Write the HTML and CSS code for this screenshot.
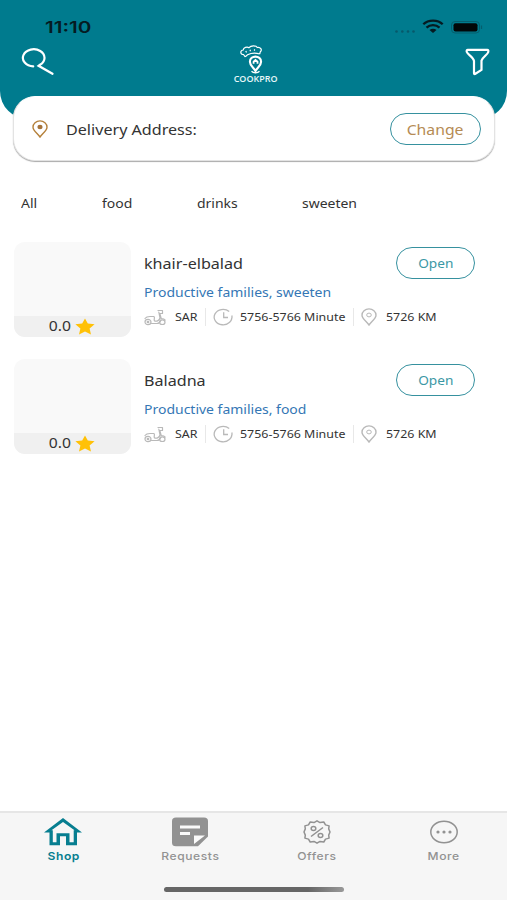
FILE: index.html
```html
<!DOCTYPE html>
<html lang="en">
<head>
<meta charset="utf-8">
<title>CookPro</title>
<link rel="stylesheet" href="styles.css">
</head>
<body>
<svg width="0" height="0" class="defs">
  <symbol id="pin" viewBox="0 0 16 18"><path d="M8 17C5.500 13.500 1 10.600 1 7.200a7 6.300 0 0 1 14 0C15 10.600 10.500 13.500 8 17Z" fill="none" stroke="currentColor" stroke-width="1.400"/></symbol>
  <symbol id="star" viewBox="0 0 20 17"><path d="M10 .4 12.800 5.600 19.600 6.300 14.600 10.400 16 16.600 10 13.500 4 16.600 5.400 10.400.4 6.300 7.200 5.600Z" fill="#ffc107"/></symbol>
  <symbol id="moto" viewBox="0 0 22 18"><g fill="none" stroke="#b9b9b9" stroke-width="1.200" stroke-linecap="round" stroke-linejoin="round"><ellipse cx="4" cy="14" rx="3" ry="2.600"/><ellipse cx="4" cy="14" rx=".8" ry=".6"/><ellipse cx="18.300" cy="14.200" rx="2.700" ry="2.300"/><path d="M1 10.500c1-1.500 3-2 5-2h4c1.200 1.500-.6 3.200.6 4.500 2.400.8 4.800-.8 5.400-3L14.800 4M14 2.500h4.500v3h-2.700l1.400 5c2 .2 3.300.6 4 1.500M7.500 15.500h5.500c2 0 3.200-1.500 3.900-3.500"/></g></symbol>
  <symbol id="clock" viewBox="0 0 20 18"><g fill="none" stroke="#b9b9b9" stroke-width="1.300"><path d="M18.800 7.500A8.900 7.700 0 1 1 16.200 3.500M18.900 9.500c-.2 2.500-1.200 4-2.500 5"/><path d="M10.700 4.200v5.300H15"/></g></symbol>
</svg>

<header class="header">
  <div class="status">
    <span class="time">11:10</span>
    <svg class="signal" width="90" height="18" viewBox="0 0 90 18">
      <g fill="#07596a"><circle cx="3.500" cy="13.500" r="1.300"/><circle cx="9.300" cy="13.500" r="1.300"/><circle cx="15" cy="13.500" r="1.300"/><circle cx="20.500" cy="13.500" r="1.300"/></g>
      <g transform="translate(-2 0)"><g fill="none" stroke="#051b22" stroke-width="2.300"><path d="M32.300 6.300c5-5 14.500-5 19.400 0"/><path d="M35.500 9.600c3.500-3.300 9.500-3.300 13 0"/></g>
      <path d="M38.500 12c2-1.700 5-1.700 7 0L42 15Z" fill="#051b22"/></g>
      <rect x="58.500" y="3.500" width="28" height="11.500" rx="3.500" fill="none" stroke="#055e6d"/>
      <rect x="60.500" y="5.200" width="24" height="8.300" rx="2" fill="#020708"/>
      <path d="M88.500 7.500v3.500" stroke="#055e6d" stroke-width="1.200"/>
    </svg>
  </div>
  <div class="bar">
    <svg width="34" height="28" viewBox="0 0 34 28" fill="none" stroke="#fff" stroke-width="2.200" stroke-linecap="round"><path d="M12.200 18.400A10.800 8.600 0 1 1 19 16.800L17.600 17.800 31.500 25.800"/></svg>
    <div class="logo">
      <svg width="32" height="30" viewBox="0 0 32 30" fill="none" stroke="#fff">
        <path d="M5.200 12.800 3.500 10.500C.2 10.500-.2 6.500 3.200 6 3.500 3.500 7 2.300 9 3.700 11 1.500 16 1.200 17.300 3.500c3.200-.6 5.200 2.300 3 4.300l-.6 2.200M5.200 12.800C7.500 9.700 13.500 8 19.700 10M6.500 8.500 5.800 7M10.500 7.300 10 5.800M14.500 6.800V5.200" stroke-width="1.200"/>
        <path d="M15.500 27c-1.500-3.200-5.600-5-5.600-9.300 0-6.800 11.200-6.800 11.200 0C21.100 22 17 23.800 15.500 27Z" stroke-width="2.100"/>
        <path d="M12.700 17.300 15.500 14.700l2.900 2.600v2.500h-1.800v-1.800h-2.100v1.800h-1.800Z" fill="#fff" stroke="none"/>
        <path d="M11.500 27.300c1.800 2 6.200 2 8 0" stroke-width="1.300"/>
      </svg>
      <span class="brand">COOKPRO</span>
    </div>
    <svg class="filter" width="25" height="28" viewBox="0 0 25 28" fill="none" stroke="#fff" stroke-width="2.200" stroke-linejoin="round"><path d="M2.800 1.800h19.400q1.600 0 1 2.300c-.5 2.500-5.500 5-6.700 8.500v9.300L10 26q-1 .3-1-1V13C8.500 9 2.500 6.500 1.700 3.800q-.3-2 1.100-2Z"/></svg>
  </div>
</header>

<section class="address">
  <svg class="address-pin" width="16" height="18"><use href="#pin"/><ellipse cx="8" cy="7" rx="2.600" ry="2.200" fill="#a5733a"/></svg>
  <span class="address-label wide">Delivery Address:</span>
  <button class="pill change"><span>Change</span></button>
</section>

<nav class="tabs"><span class="wide">All</span><span class="wide">food</span><span class="wide">drinks</span><span class="wide">sweeten</span></nav>

<main class="shops">
  <article class="shop">
    <div class="thumb"><div class="rating"><span>0.0</span><svg width="20" height="17"><use href="#star"/></svg></div></div>
    <div class="info">
      <div class="top"><h2 class="wide">khair-elbalad</h2><button class="pill open"><span>Open</span></button></div>
      <p class="kinds wide">Productive families, sweeten</p>
      <div class="meta">
        <svg width="22" height="18"><use href="#moto"/></svg><span class="sar">SAR</span>
        <svg class="ruled" width="20" height="18"><use href="#clock"/></svg><span class="minutes">5756-5766 Minute</span>
        <svg class="ruled grey" width="16" height="18"><use href="#pin"/><ellipse cx="8" cy="7" rx="2.300" ry="1.900" fill="none" stroke="#b9b9b9"/></svg><span class="km">5726 KM</span>
      </div>
    </div>
  </article>
  <article class="shop">
    <div class="thumb"><div class="rating"><span>0.0</span><svg width="20" height="17"><use href="#star"/></svg></div></div>
    <div class="info">
      <div class="top"><h2 class="wide">Baladna</h2><button class="pill open"><span>Open</span></button></div>
      <p class="kinds wide">Productive families, food</p>
      <div class="meta">
        <svg width="22" height="18"><use href="#moto"/></svg><span class="sar">SAR</span>
        <svg class="ruled" width="20" height="18"><use href="#clock"/></svg><span class="minutes">5756-5766 Minute</span>
        <svg class="ruled grey" width="16" height="18"><use href="#pin"/><ellipse cx="8" cy="7" rx="2.300" ry="1.900" fill="none" stroke="#b9b9b9"/></svg><span class="km">5726 KM</span>
      </div>
    </div>
  </article>
</main>

<footer class="footer">
  <div class="footer-tabs">
    <div class="item active">
      <svg width="38" height="30" viewBox="0 0 38 30"><path d="M0 15.500 19 1l19 14.500h-5V28.200h-11v-9h-6v9H5.500V15.500Z" fill="currentColor"/><path d="M7.500 13.300 19 5l11.500 8.300H29.700V25.200h-4.200v-9h-13v9H8.800V13.300Z" fill="#f6f6f6"/></svg>
      <span>Shop</span>
    </div>
    <div class="item">
      <svg width="38" height="30" viewBox="0 0 38 30"><path d="M5 .5h28q4 0 4 3.500V19.500L27 29.200H5q-4 0-4-3.500V4Q1 .5 5 .5Z" fill="#929292"/><path d="M9 8.500h20v3H9ZM9 15h10v3H9ZM23 18.500h11L23 27Z" fill="#fafafa"/></svg>
      <span>Requests</span>
    </div>
    <div class="item">
      <svg width="38" height="30" viewBox="0 0 38 30" fill="none" stroke="#929292" stroke-width="1.500"><path d="m19 3.800 3 1.800 3.800-.6 1.700 2.900 3.600 1-.4 3L32 15l-1.300 3.100.4 3-3.600 1-1.700 2.900-3.800-.6-3 1.800-3-1.800-3.800.6-1.700-2.900-3.600-1 .4-3L6 15l1.300-3.100-.4-3 3.600-1 1.700-2.900 3.800.6Z" stroke-linejoin="round"/><path d="M25 10.500 13 19.500"/><ellipse cx="15.500" cy="11.500" rx="2.300" ry="2"/><ellipse cx="22.500" cy="18.500" rx="2.300" ry="2"/></svg>
      <span>Offers</span>
    </div>
    <div class="item">
      <svg width="38" height="30" viewBox="0 0 38 30"><ellipse cx="19" cy="15" rx="13.200" ry="10.800" fill="none" stroke="#929292" stroke-width="1.500"/><g fill="#929292"><circle cx="13" cy="15" r="1.600"/><circle cx="19" cy="15" r="1.600"/><circle cx="25" cy="15" r="1.600"/></g></svg>
      <span>More</span>
    </div>
  </div>
  <div class="home-indicator"></div>
</footer>
</body>
</html>
```

FILE: styles.css
```css
* { box-sizing: border-box; }
body {
  margin: 0;
  height: 900px;
  display: flex;
  flex-direction: column;
  overflow: hidden;
  background: #fff;
  color: #333;
  font-family: "Noto Sans", sans-serif;
}
.defs { position: absolute; }
svg { display: block; flex: none; }
span, h2, p { white-space: nowrap; }
.wide { transform: scaleX(1.075); transform-origin: left; }

.header {
  height: 119px;
  flex: none;
  background: #007b8e;
  border-radius: 0 0 28px 28px;
}
.status {
  display: flex;
  justify-content: space-between;
  height: 44px;
  padding: 18px 24px 0 45px;
}
.time {
  font: 600 16px/18px Inter, sans-serif;
  color: #051b22;
  transform: scaleX(1.29);
  transform-origin: left;
}
.bar {
  display: grid;
  grid-template-columns: 1fr 60px 1fr;
  padding: 0 17px 0 21px;
}
.bar > svg { margin-top: 4px; }
.filter { justify-self: end; }
.logo {
  display: flex;
  flex-direction: column;
  align-items: center;
}
.brand {
  font: 600 8px/9px "Open Sans", sans-serif;
  color: #e8f8fa;
  transform: scaleX(1.12);
}

.address {
  display: flex;
  align-items: center;
  flex: none;
  height: 65px;
  margin: -23px 12px 0 13px;
  padding: 0 13px 0 18px;
  background: #fff;
  border: 1px solid #e3e3e3;
  border-top-color: #fff;
  border-radius: 22px;
  box-shadow: 0 1px 1px #aaa;
}
.address-pin { color: #b5813b; }
.address-label {
  flex: 1;
  margin-left: 18px;
  font-size: 15px;
}
.pill {
  display: flex;
  align-items: center;
  justify-content: center;
  flex: none;
  padding: 0;
  background: #fff;
  border: 1.5px solid #36919f;
  border-radius: 20px;
  font-family: inherit;
}
.pill span { transform: scaleX(1.05); }
.change {
  width: 91px;
  height: 32px;
  color: #b58b54;
  font-size: 15px;
}

.tabs {
  display: grid;
  grid-template-columns: 81px 95px 105px auto;
  flex: none;
  margin: 32px 0 0 21px;
  font-size: 13px;
  line-height: 20px;
}

.shops {
  display: flex;
  flex-direction: column;
  gap: 22px;
  margin: 29px 32px 0 14px;
}
.shop { display: flex; height: 95px; }
.thumb {
  display: flex;
  align-items: flex-end;
  flex: none;
  width: 117px;
  background: #f9f9f9;
  border-radius: 11px;
  overflow: hidden;
}
.rating {
  display: flex;
  align-items: center;
  justify-content: center;
  gap: 5px;
  width: 100%;
  height: 21px;
  background: #f0f0f0;
  font-size: 14px;
  line-height: 19px;
}
.rating span { margin-top: -2px; transform: scaleX(1.12); }
.info {
  flex: 1;
  min-width: 0;
  margin-left: 13px;
  padding-top: 5px;
}
.top { display: flex; justify-content: space-between; }
h2 {
  margin: 5px 0 0;
  font-size: 15px;
  font-weight: 400;
  line-height: 22px;
}
.open {
  width: 79px;
  height: 32px;
  color: #3b98a5;
  font-size: 13px;
}
.kinds {
  width: 180px;
  margin: 3px 0 0;
  color: #3577b5;
  font-size: 13px;
  line-height: 20px;
}
.meta {
  display: flex;
  align-items: center;
  height: 18px;
  margin-top: 6px;
  font-size: 11px;
  line-height: 16px;
}
.meta span { margin-top: -1px; transform: scaleX(1.13); transform-origin: left; }
.sar { width: 30px; margin-left: 9px; }
.ruled {
  box-sizing: content-box;
  padding-left: 7px;
  border-left: 1px solid #e8e8e8;
}
.minutes { width: 113px; margin-left: 7px; }
.km { margin-left: 9px; }
.grey { color: #b9b9b9; }

.footer {
  height: 89px;
  flex: none;
  margin-top: auto;
  background: #f6f6f6;
  border-top: 2px solid #e6e6e6;
}
.footer-tabs {
  display: grid;
  grid-template-columns: repeat(4, 1fr);
  height: 73px;
  padding-top: 4px;
}
.item {
  display: flex;
  flex-direction: column;
  align-items: center;
  color: #929292;
  font: 500 11px/18px Inter, sans-serif;
}
.item span { letter-spacing: .5px; transform: scaleX(1.1); }
.active { color: #077e90; }
.active span { font-weight: 600; }
.home-indicator {
  width: 180px;
  height: 5px;
  margin: 1px auto 0;
  border-radius: 3px;
  background: linear-gradient(90deg, #666 80%, #999);
}
```
